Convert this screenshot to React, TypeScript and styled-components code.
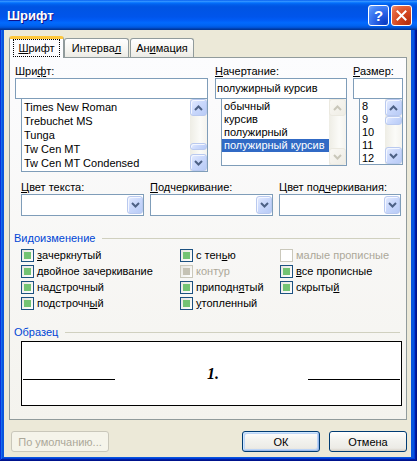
import React from "react";
import styled, { createGlobalStyle } from "styled-components";

const Global = createGlobalStyle`
  html, body { margin: 0; padding: 0; background: #ffffff; }
  body { font-family: "Liberation Sans", Arial, sans-serif; font-size: 11px; color: #000; }
  * { box-sizing: border-box; }
  u { text-decoration: underline; text-underline-offset: 1px; }
`;

const Window = styled.div`
  width: 417px;
  height: 461px;
  display: flex;
  flex-direction: column;
  background: #0855dd;
  box-shadow: inset -1px -1px #00138c, inset 1px 1px #0831d9, inset -2px -2px #001ea0,
    inset 2px 2px #166aee, inset -3px -3px #003bda, inset 3px 3px #0855dd;
`;

const TitleBar = styled.div`
  height: 30px;
  flex-shrink: 0;
  display: flex;
  align-items: center;
  padding: 0 5px 0 7px;
  background: linear-gradient(
    180deg,
    #0058ee 0%,
    #3593ff 4%,
    #288eff 6%,
    #127dff 8%,
    #036ffc 10%,
    #0262ee 14%,
    #0057e5 20%,
    #0054e3 24%,
    #0055eb 56%,
    #005bf5 66%,
    #026afe 76%,
    #0062ef 86%,
    #0052d6 92%,
    #0040ab 96%,
    #003092 100%
  );
`;

const Title = styled.div`
  color: #fff;
  font-family: "Liberation Sans", Arial, sans-serif;
  font-weight: bold;
  font-size: 13px;
  text-shadow: 1px 1px #0f1089;
  margin-top: 1px;
`;

const CaptionButtons = styled.div`
  margin-left: auto;
  display: flex;
  gap: 2px;
`;

const CaptionButton = styled.div<{ $kind: "help" | "close" }>`
  width: 21px;
  height: 21px;
  border: 1px solid #fff;
  border-radius: 3px;
  display: flex;
  align-items: center;
  justify-content: center;
  color: #fff;
  font-family: "Liberation Sans", Arial, sans-serif;
  font-weight: bold;
  font-size: 15px;
  background: ${(p) =>
    p.$kind === "help"
      ? "radial-gradient(circle at 85% 90%, #0b3cc4 0%, #2a63e8 45%, #4c8af8 80%, #7eaefc 100%)"
      : "radial-gradient(circle at 85% 90%, #b52f0f 0%, #d4461f 45%, #e76a45 80%, #f29b7e 100%)"};
`;

const Body = styled.div`
  flex: 1;
  margin: 0 6px 4px 4px;
  background: #ece9d8;
  padding: 0 4px 0 5px;
  display: flex;
  flex-direction: column;
`;

const TabStrip = styled.div`
  display: flex;
  align-items: flex-end;
  height: 21px;
  margin-top: 6px;
  position: relative;
  z-index: 2;
`;

const Tab = styled.div<{ $active?: boolean; $w: number; $ml?: number }>`
  width: ${(p) => p.$w}px;
  margin-left: ${(p) => p.$ml ?? 0}px;
  height: ${(p) => (p.$active ? 22 : 19)}px;
  margin-bottom: ${(p) => (p.$active ? -1 : 0)}px;
  border: 1px solid #919b9c;
  border-bottom: none;
  border-top: ${(p) => (p.$active ? "3px solid #ffc83c" : "1px solid #919b9c")};
  border-radius: 3px 3px 0 0;
  background: ${(p) => (p.$active ? "#fcfcfe" : "linear-gradient(180deg, #ffffff 0%, #f4f3ee 70%, #ecebe5 100%)")};
  display: flex;
  justify-content: center;
  align-items: flex-start;
  padding-top: ${(p) => (p.$active ? 0 : 2)}px;
  line-height: 15px;
  white-space: nowrap;
`;

const FocusLabel = styled.span`
  border: 1px dotted #000;
  padding: 0 4px;
  line-height: 16px;
`;

const Panel = styled.div`
  height: 363px;
  flex-shrink: 0;
  border: 1px solid #919b9c;
  background: linear-gradient(180deg, #fcfcfe 0%, #f4f3ee 100%);
  padding-top: 7px;
  display: flex;
  flex-direction: column;
  position: relative;
  z-index: 1;
`;

const TopRow = styled.div`
  display: flex;
  align-items: flex-start;
  padding-left: 5px;
`;

const Column = styled.div<{ $w: number; $ml?: number }>`
  width: ${(p) => p.$w}px;
  margin-left: ${(p) => p.$ml ?? 0}px;
  display: flex;
  flex-direction: column;
`;

const FieldLabel = styled.div`
  height: 13px;
  line-height: 13px;
  white-space: nowrap;
`;

const TextInput = styled.div`
  height: 21px;
  border: 1px solid #7f9db9;
  background: #fff;
  padding: 0 1px;
  line-height: 19px;
  white-space: nowrap;
`;

const ListBox = styled.div<{ $h: number }>`
  margin-left: 6px;
  height: ${(p) => p.$h}px;
  border: 1px solid #7f9db9;
  border-top: none;
  background: #fff;
  display: flex;
  overflow: hidden;
`;

const ListItems = styled.div`
  flex: 1;
  min-width: 0;
  padding-top: 1px;
  overflow: hidden;
`;

const ListItem = styled.div<{ $selected?: boolean; $h: number }>`
  height: ${(p) => p.$h}px;
  line-height: ${(p) => p.$h}px;
  padding-left: 2px;
  white-space: nowrap;
  background: ${(p) => (p.$selected ? "#316ac5" : "transparent")};
  color: ${(p) => (p.$selected ? "#fff" : "#000")};
`;

const ScrollBar = styled.div`
  width: 17px;
  flex-shrink: 0;
  display: flex;
  flex-direction: column;
  background: linear-gradient(90deg, #eeede5 0%, #fbfbf8 60%, #f4f3ee 100%);
`;

const ScrollTrack = styled.div<{ $offset: number }>`
  flex: 1;
  padding-top: ${(p) => p.$offset}px;
`;

const ArrowButton = styled.div<{ $disabled?: boolean; $h?: number }>`
  height: ${(p) => p.$h ?? 17}px;
  flex-shrink: 0;
  display: flex;
  align-items: center;
  justify-content: center;
  border-radius: 3px;
  border: 1px solid ${(p) => (p.$disabled ? "#ebe9e0" : "#b9c9ef")};
  background: ${(p) =>
    p.$disabled
      ? "linear-gradient(135deg, #f9f8f4 0%, #efede5 100%)"
      : "linear-gradient(135deg, #e4ebfe 0%, #cbd9fc 45%, #b8cbf6 100%)"};
  box-shadow: ${(p) => (p.$disabled ? "none" : "inset 1px 1px 0 #f4f7ff")};
  color: ${(p) => (p.$disabled ? "#c9c7ba" : "#4d6185")};
`;

const ComboBox = styled.div<{ $w: number }>`
  width: ${(p) => p.$w}px;
  height: 22px;
  border: 1px solid #7f9db9;
  background: #fff;
  display: flex;
  justify-content: flex-end;
  padding: 1px 0 1px 1px;
`;

const ComboButton = styled(ArrowButton)`
  width: 16px;
  height: 18px;
  margin: 0;
`;

const ComboRow = styled.div`
  display: flex;
  gap: 6px;
  margin-top: 9px;
  padding-left: 11px;
`;

const ComboField = styled.div`
  display: flex;
  flex-direction: column;
`;

const GroupHeader = styled.div<{ $mt: number }>`
  display: flex;
  align-items: center;
  height: 13px;
  margin-top: ${(p) => p.$mt}px;
  padding: 0 6px 0 4px;
  color: #0046d5;
  line-height: 13px;
  white-space: nowrap;
`;

const GroupLine = styled.div`
  flex: 1;
  height: 1px;
  margin-left: 7px;
  margin-top: -1px;
  background: #d0d0bf;
`;

const CheckGrid = styled.div`
  display: grid;
  grid-template-columns: 159px 100px 1fr;
  grid-template-rows: repeat(4, 16px);
  grid-auto-flow: column;
  margin-top: 2px;
  padding-left: 11px;
`;

const CheckRow = styled.div<{ $disabled?: boolean }>`
  display: flex;
  align-items: center;
  gap: 3px;
  white-space: nowrap;
  color: ${(p) => (p.$disabled ? "#aca899" : "#000")};
`;

const CheckBox = styled.span<{ $state: "on" | "dimmed" | "off" }>`
  width: 13px;
  height: 13px;
  flex-shrink: 0;
  border: 1px solid ${(p) => (p.$state === "on" ? "#1c5180" : "#cac8bb")};
  background: ${(p) => (p.$state === "off" ? "#fff" : "linear-gradient(135deg, #e6e5df 0%, #ffffff 100%)")};
  display: flex;
  align-items: center;
  justify-content: center;
  &::after {
    content: "";
    display: ${(p) => (p.$state === "off" ? "none" : "block")};
    width: 7px;
    height: 7px;
    background: ${(p) => (p.$state === "on" ? "#73c373" : "#c5c2b4")};
  }
`;

const SampleBox = styled.div`
  width: 381px;
  height: 65px;
  margin: 2px 0 0 11px;
  border: 1px solid #000;
  background: #fff;
  display: flex;
  align-items: center;
  justify-content: space-between;
  padding: 0 1px;
`;

const SampleLine = styled.div`
  width: 92px;
  height: 1px;
  background: #000;
  margin-top: 12px;
`;

const SampleText = styled.div`
  font-family: "Liberation Serif", "Times New Roman", serif;
  font-weight: bold;
  font-style: italic;
  font-size: 16px;
  line-height: 16px;
  margin-left: 3px;
`;

const Footer = styled.div`
  display: flex;
  height: 21px;
  margin-top: 11px;
  gap: 9px;
`;

const Button = styled.div<{ $w: number; $variant?: "default" | "disabled"; $ml?: string }>`
  width: ${(p) => p.$w}px;
  height: 21px;
  margin-left: ${(p) => p.$ml ?? "0"};
  border-radius: 3px;
  display: flex;
  align-items: center;
  justify-content: center;
  white-space: nowrap;
  border: 1px solid ${(p) => (p.$variant === "disabled" ? "#c9c7ba" : "#003c74")};
  color: ${(p) => (p.$variant === "disabled" ? "#aca899" : "#000")};
  background: ${(p) =>
    p.$variant === "disabled" ? "#f5f4ea" : "linear-gradient(180deg, #ffffff 0%, #f3f3ef 40%, #ecebe6 85%, #d6d0c5 100%)"};
  box-shadow: ${(p) =>
    p.$variant === "default"
      ? "inset 1px 1px #cee7ff, inset -1px -1px #98b8ea, inset -2px -2px #bcd4f6, inset 2px 2px #bcd4f6"
      : "none"};
`;

const Chevron: React.FC<{ dir: "up" | "down" }> = ({ dir }) => (
  <svg width="9" height="6" viewBox="0 0 9 6">
    <path
      d={dir === "up" ? "M1 5 L4.5 1.5 L8 5" : "M1 1 L4.5 4.5 L8 1"}
      fill="none"
      stroke="currentColor"
      strokeWidth="2"
    />
  </svg>
);

const CloseGlyph = () => (
  <svg width="11" height="11" viewBox="0 0 11 11">
    <path d="M1.5 1.5 L9.5 9.5 M9.5 1.5 L1.5 9.5" stroke="#fff" strokeWidth="2" strokeLinecap="square" />
  </svg>
);

type ScrollProps = { disabled?: boolean; thumbOffset?: number; thumbHeight?: number };

const Scroller: React.FC<ScrollProps> = ({ disabled, thumbOffset = 0, thumbHeight }) => (
  <ScrollBar>
    <ArrowButton $disabled={disabled}>
      <Chevron dir="up" />
    </ArrowButton>
    <ScrollTrack $offset={thumbOffset}>
      {!disabled && thumbHeight ? <ArrowButton $h={thumbHeight} /> : null}
    </ScrollTrack>
    <ArrowButton $disabled={disabled}>
      <Chevron dir="down" />
    </ArrowButton>
  </ScrollBar>
);

const fonts = ["Times New Roman", "Trebuchet MS", "Tunga", "Tw Cen MT", "Tw Cen MT Condensed"];
const styles = ["обычный", "курсив", "полужирный", "полужирный курсив"];
const sizes = ["8", "9", "10", "11", "12"];

type Effect = { label: React.ReactNode; state: "on" | "dimmed" | "off" };

const effects: Effect[] = [
  { label: <><u>з</u>ачеркнутый</>, state: "on" },
  { label: <><u>д</u>войное зачеркивание</>, state: "on" },
  { label: <>над<u>с</u>трочный</>, state: "on" },
  { label: <>подстрочн<u>ы</u>й</>, state: "on" },
  { label: <>с тен<u>ь</u>ю</>, state: "on" },
  { label: <>контур</>, state: "dimmed" },
  { label: <>приподн<u>я</u>тый</>, state: "on" },
  { label: <><u>у</u>топленный</>, state: "on" },
  { label: <>малые прописные</>, state: "off" },
  { label: <><u>в</u>се прописные</>, state: "on" },
  { label: <>скрыты<u>й</u></>, state: "on" },
];

export default function App() {
  return (
    <>
      <Global />
      <Window>
        <TitleBar>
          <Title>Шрифт</Title>
          <CaptionButtons>
            <CaptionButton $kind="help">?</CaptionButton>
            <CaptionButton $kind="close">
              <CloseGlyph />
            </CaptionButton>
          </CaptionButtons>
        </TitleBar>
        <Body>
          <TabStrip>
            <Tab $active $w={55}>
              <FocusLabel>
                <u>Ш</u>рифт
              </FocusLabel>
            </Tab>
            <Tab $w={65}>
              Интерва<u>л</u>
            </Tab>
            <Tab $w={64} $ml={1}>
              Ан<u>и</u>мация
            </Tab>
          </TabStrip>
          <Panel>
            <TopRow>
              <Column $w={193}>
                <FieldLabel>
                  Шри<u>ф</u>т:
                </FieldLabel>
                <TextInput />
                <ListBox $h={73}>
                  <ListItems>
                    {fonts.map((f) => (
                      <ListItem key={f} $h={14}>
                        {f}
                      </ListItem>
                    ))}
                  </ListItems>
                  <Scroller thumbOffset={27} thumbHeight={7} />
                </ListBox>
              </Column>
              <Column $w={132} $ml={7}>
                <FieldLabel>
                  <u>Н</u>ачертание:
                </FieldLabel>
                <TextInput>полужирный курсив</TextInput>
                <ListBox $h={67}>
                  <ListItems>
                    {styles.map((s, i) => (
                      <ListItem key={s} $h={13} $selected={i === 3}>
                        {s}
                      </ListItem>
                    ))}
                  </ListItems>
                  <Scroller disabled />
                </ListBox>
              </Column>
              <Column $w={50} $ml={6}>
                <FieldLabel>
                  <u>Р</u>азмер:
                </FieldLabel>
                <TextInput />
                <ListBox $h={66}>
                  <ListItems>
                    {sizes.map((s) => (
                      <ListItem key={s} $h={13}>
                        {s}
                      </ListItem>
                    ))}
                  </ListItems>
                  <Scroller thumbOffset={0} thumbHeight={9} />
                </ListBox>
              </Column>
            </TopRow>

            <ComboRow>
              <ComboField>
                <FieldLabel>
                  <u>Ц</u>вет текста:
                </FieldLabel>
                <ComboBox $w={123}>
                  <ComboButton>
                    <Chevron dir="down" />
                  </ComboButton>
                </ComboBox>
              </ComboField>
              <ComboField>
                <FieldLabel>
                  <u>П</u>одчеркивание:
                </FieldLabel>
                <ComboBox $w={123}>
                  <ComboButton>
                    <Chevron dir="down" />
                  </ComboButton>
                </ComboBox>
              </ComboField>
              <ComboField>
                <FieldLabel>
                  Цвет под<u>ч</u>еркивания:
                </FieldLabel>
                <ComboBox $w={122}>
                  <ComboButton>
                    <Chevron dir="down" />
                  </ComboButton>
                </ComboBox>
              </ComboField>
            </ComboRow>

            <GroupHeader $mt={16}>
              Видоизменение
              <GroupLine />
            </GroupHeader>
            <CheckGrid>
              {effects.map((e, i) => (
                <CheckRow key={i} $disabled={e.state !== "on"}>
                  <CheckBox $state={e.state} />
                  <span>{e.label}</span>
                </CheckRow>
              ))}
            </CheckGrid>

            <GroupHeader $mt={15}>
              Образец
              <GroupLine />
            </GroupHeader>
            <SampleBox>
              <SampleLine />
              <SampleText>1.</SampleText>
              <SampleLine />
            </SampleBox>
          </Panel>
          <Footer>
            <Button $w={98} $variant="disabled" $ml="2px">
              По умолчанию...
            </Button>
            <Button $w={78} $variant="default" $ml="auto">
              ОК
            </Button>
            <Button $w={78}>Отмена</Button>
          </Footer>
        </Body>
      </Window>
    </>
  );
}
